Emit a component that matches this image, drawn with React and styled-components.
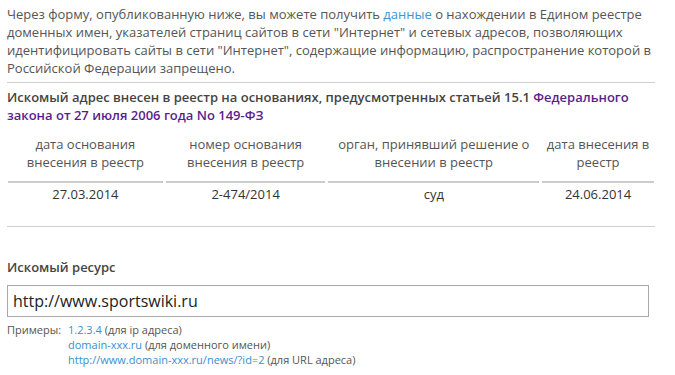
import React from "react";
import styled, { createGlobalStyle } from "styled-components";

const GlobalStyle = createGlobalStyle`
  body {
    margin: 0;
    background: #fff;
    font-family: "Open Sans", "Liberation Sans", sans-serif;
    font-size: 13px;
    color: #555;
  }
`;

const Page = styled.div`
  width: 648px;
  margin-left: 7px;
  padding-top: 5px;
`;

const Intro = styled.p`
  margin: 0;
  line-height: 18px;
`;

const Link = styled.a`
  color: ${(p) => (p.visited ? "#5a1e8c" : "#3a95d4")};
  text-decoration: none;
`;

const Rule = styled.hr`
  border: 0;
  border-top: 1px solid #d0d0d0;
  margin: ${(p) => p.$m || "5px 0 0"};
  width: 648px;
`;

const Heading = styled.div`
  margin-top: ${(p) => p.$top || "5px"};
  font-weight: 600;
  color: #444;
  line-height: 18px;
`;

const Table = styled.table`
  border-collapse: separate;
  border-spacing: 3px 0;
  margin: 7px 0 0 -2px;
  width: 652px;
`;

const Th = styled.th`
  font-weight: normal;
  color: #555;
  line-height: 18px;
  padding: 4px 0 10px;
  border-bottom: 2px solid #cccccc;
  text-align: center;
  width: ${(p) => p.$w}px;
`;

const Td = styled.td`
  color: #333;
  text-align: center;
  line-height: 18px;
  padding: 2px 0 0;
`;

const Field = styled.input`
  display: block;
  box-sizing: border-box;
  width: 642px;
  height: 32px;
  margin-top: 9px;
  padding: 0 5px;
  border: 1px solid #a8a8a8;
  font-family: "Open Sans", "Liberation Sans", sans-serif;
  font-size: 16px;
  color: #222;
  outline: none;
`;

const Examples = styled.div`
  display: grid;
  grid-template-columns: 61px 1fr;
  margin-top: 5px;
  font-size: 11px;
  line-height: 15px;
  color: #555;
`;

const ExampleList = styled.div`
  display: flex;
  flex-direction: column;
`;

const ExLink = styled.a`
  color: #3a8ed0;
  text-decoration: none;
`;

const App = () => {
  return (
    <Page>
      <GlobalStyle />
      <Intro>
        Через форму, опубликованную ниже, вы можете получить{" "}
        <Link href="#">данные</Link> о нахождении в Едином реестре доменных
        имен, указателей страниц сайтов в сети "Интернет" и сетевых адресов,
        позволяющих идентифицировать сайты в сети "Интернет", содержащие
        информацию, распространение которой в Российской Федерации запрещено.
      </Intro>
      <Rule />
      <Heading>
        Искомый адрес внесен в реестр на основаниях, предусмотренных статьей
        15.1{" "}
        <Link href="#" visited>
          Федерального закона от 27 июля 2006 года No 149-ФЗ
        </Link>
      </Heading>
      <Table>
        <thead>
          <tr>
            <Th $w={155}>
              дата основания
              <br />
              внесения в реестр
            </Th>
            <Th $w={160}>
              номер основания
              <br />
              внесения в реестр
            </Th>
            <Th $w={211}>
              орган, принявший решение о<br />
              внесении в реестр
            </Th>
            <Th $w={112}>
              дата внесения в<br />
              реестр
            </Th>
          </tr>
        </thead>
        <tbody>
          <tr>
            <Td>27.03.2014</Td>
            <Td>2-474/2014</Td>
            <Td>суд</Td>
            <Td>24.06.2014</Td>
          </tr>
        </tbody>
      </Table>
      <Rule $m="23px 0 0" />
      <Heading $top="31px">Искомый ресурс</Heading>
      <Field defaultValue="http://www.sportswiki.ru" />
      <Examples>
        <span>Примеры:</span>
        <ExampleList>
          <span>
            <ExLink href="#">1.2.3.4</ExLink> (для ip адреса)
          </span>
          <span>
            <ExLink href="#">domain-xxx.ru</ExLink> (для доменного имени)
          </span>
          <span>
            <ExLink href="#">http://www.domain-xxx.ru/news/?id=2</ExLink> (для
            URL адреса)
          </span>
        </ExampleList>
      </Examples>
    </Page>
  );
};

export default App;
